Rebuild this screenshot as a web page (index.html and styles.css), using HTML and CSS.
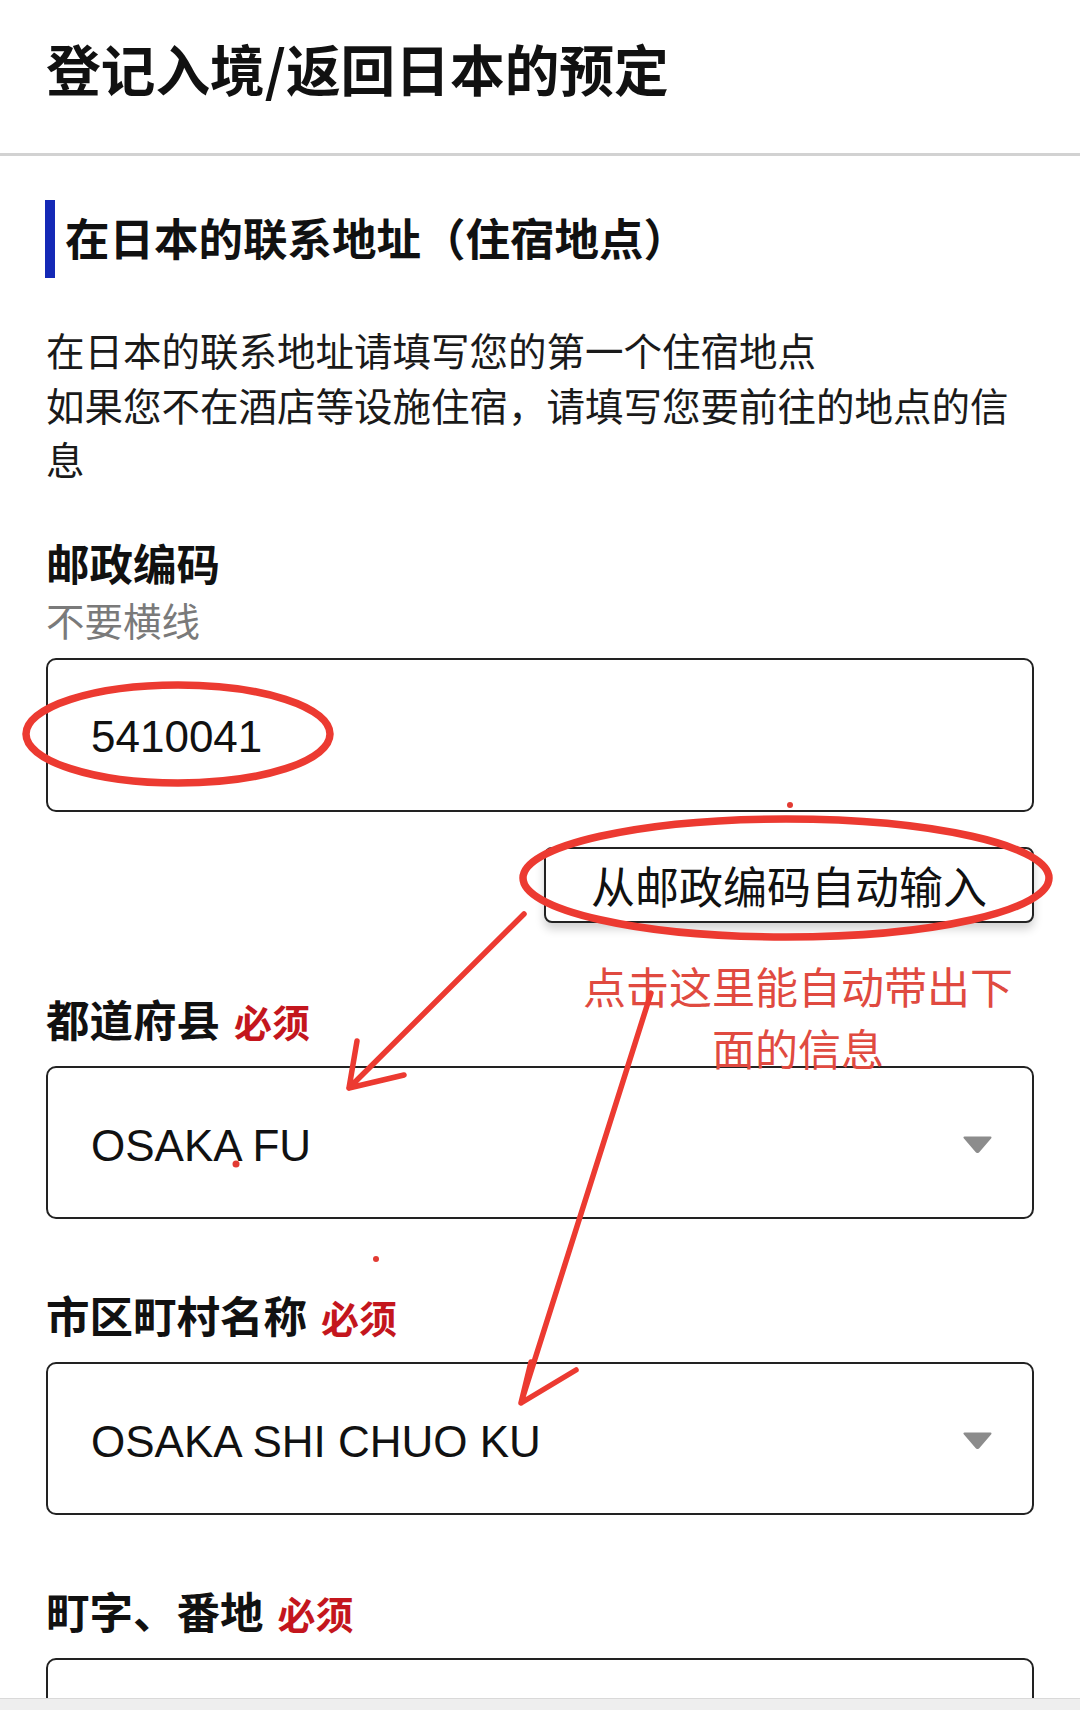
FILE: index.html
```html
<!DOCTYPE html>
<html lang="zh-CN">
<head>
<meta charset="utf-8">
<title>登记入境/返回日本的预定</title>
<link rel="stylesheet" href="styles.css">
</head>
<body>
<div class="page">
  <header class="header">
    <h1 class="title">登记入境/返回日本的预定</h1>
  </header>

  <main class="section">
    <h2 class="section-heading">在日本的联系地址（住宿地点）</h2>
    <p class="desc">在日本的联系地址请填写您的第一个住宿地点<br>如果您不在酒店等设施住宿，请填写您要前往的地点的信息</p>

    <div class="field field-first">
      <div class="label">邮政编码</div>
      <div class="hint">不要横线</div>
      <div class="input input-hint"><span class="value">5410041</span></div>
      <div class="btn-row"><button class="btn" type="button">从邮政编码自动输入</button></div>
    </div>

    <div class="field">
      <div class="label">都道府县<span class="req">必须</span></div>
      <div class="input select"><span class="value">OSAKA FU</span>
        <svg class="caret" width="29" height="17" viewBox="0 0 29 17"><path d="M1.5 1.5 H27.5 L15.5 15.5 Q14.5 16.6 13.5 15.5 Z" fill="#8c8c8c" stroke="#8c8c8c" stroke-width="2" stroke-linejoin="round"/></svg>
      </div>
    </div>

    <div class="field">
      <div class="label">市区町村名称<span class="req">必须</span></div>
      <div class="input select"><span class="value">OSAKA SHI CHUO KU</span>
        <svg class="caret" width="29" height="17" viewBox="0 0 29 17"><path d="M1.5 1.5 H27.5 L15.5 15.5 Q14.5 16.6 13.5 15.5 Z" fill="#8c8c8c" stroke="#8c8c8c" stroke-width="2" stroke-linejoin="round"/></svg>
      </div>
    </div>

    <div class="field">
      <div class="label">町字、番地<span class="req">必须</span></div>
      <div class="input"></div>
    </div>
  </main>

  <div class="note">点击这里能自动带出下面的信息</div>

  <svg class="marks" width="1080" height="1710" viewBox="0 0 1080 1710">
    <g fill="none" stroke="#ec3a31" stroke-linecap="round" stroke-linejoin="round">
      <ellipse cx="178" cy="734" rx="152" ry="49" stroke-width="7.5"/>
      <ellipse cx="786" cy="878" rx="263" ry="59" stroke-width="7.5"/>
      <path d="M524 914 L349 1088 M357 1041 L349 1088 L404 1075" stroke-width="5.5"/>
      <path d="M651 993 L521 1403 M531 1362 L521 1403 L576 1370" stroke-width="5.5"/>
    </g>
    <g fill="#e23b33">
      <circle cx="790" cy="805" r="3"/>
      <circle cx="236" cy="1164" r="3.5"/>
      <circle cx="376" cy="1259" r="3"/>
    </g>
  </svg>

  <div class="bottom-bar"></div>
</div>
</body>
</html>
```

FILE: styles.css
```css
html, body {
  margin: 0;
  padding: 0;
  background: #ffffff;
}

body {
  font-family: "Noto Sans CJK SC", "Noto Sans", sans-serif;
  color: #141414;
}

.page {
  position: relative;
  width: 1080px;
  height: 1710px;
  overflow: hidden;
}

.header {
  box-sizing: border-box;
  height: 156px;
  padding: 30px 46px 0;
  border-bottom: 3px solid #d2d2d2;
}

.title {
  margin: 0;
  font-size: 54.7px;
  line-height: 76px;
  font-weight: 700;
  color: #111;
}

.section {
  padding: 0 46px;
}

.section-heading {
  box-sizing: border-box;
  display: flex;
  align-items: center;
  height: 78px;
  margin: 44px 0 0 -1px;
  padding: 0 0 5px 10px;
  border-left: 10px solid #1429b6;
  font-size: 44.5px;
  line-height: 60px;
  font-weight: 700;
  color: #111;
}

.desc {
  margin: 44px 0 0;
  font-size: 38.5px;
  line-height: 54.5px;
  color: #1a1a1a;
}

.field {
  margin-top: 67px;
}

.field-first {
  margin-top: 48px;
}

.label {
  display: flex;
  align-items: baseline;
  font-size: 43.5px;
  line-height: 58px;
  font-weight: 700;
  color: #111;
}

.req {
  margin-left: 14px;
  font-size: 38px;
  color: #c4161d;
}

.hint {
  font-size: 38.5px;
  line-height: 54.5px;
  color: #7a7a7a;
}

.input {
  box-sizing: border-box;
  height: 153px;
  margin-top: 16px;
  padding: 6px 40px 0 43px;
  border: 2px solid #222;
  border-radius: 10px;
  background: #fff;
  display: flex;
  align-items: center;
  font-family: "Liberation Sans", Arial, sans-serif;
  font-size: 44px;
  color: #111;
}

.input-hint {
  height: 154px;
  margin-top: 12px;
  padding-top: 4px;
}

.select {
  justify-content: space-between;
}

.caret {
  display: block;
  margin-top: -2px;
}

.btn-row {
  display: flex;
  justify-content: flex-end;
  margin-top: 35px;
}

.btn {
  box-sizing: border-box;
  height: 76px;
  margin: 0;
  padding: 0 45px;
  border: 2px solid #222;
  border-radius: 8px;
  background: #fff;
  font-family: "Noto Sans CJK SC", sans-serif;
  font-size: 44px;
  line-height: 70px;
  color: #111;
  box-shadow: 0 6px 10px rgba(0, 0, 0, 0.18);
}

.note {
  position: absolute;
  left: 578px;
  top: 954px;
  width: 440px;
  text-align: center;
  font-size: 43px;
  line-height: 62px;
  color: #e04a40;
}

.marks {
  position: absolute;
  left: 0;
  top: 0;
  pointer-events: none;
}

.bottom-bar {
  position: absolute;
  left: 0;
  right: 0;
  bottom: 0;
  height: 11px;
  background: #eeeeee;
  border-top: 1px solid #d9d9d9;
}
```
